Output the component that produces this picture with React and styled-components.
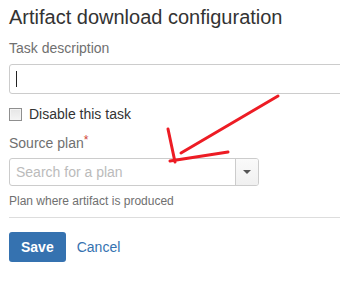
import React from 'react';
import styled, { createGlobalStyle } from 'styled-components';

const GlobalStyle = createGlobalStyle`
  html, body {
    margin: 0;
    padding: 0;
    background: #fff;
    overflow: hidden;
  }
  body {
    font-family: Arial, "Liberation Sans", sans-serif;
    color: #333;
  }
`;

const App = () => {
  return (
    <Page>
      <GlobalStyle />
      <Form>
        <Title>Artifact download configuration</Title>
        <Field>
          <Label>Task description</Label>
          <TextBox>
            <Caret />
          </TextBox>
        </Field>
        <CheckRow>
          <CheckBox />
          <CheckLabel>Disable this task</CheckLabel>
        </CheckRow>
        <Field>
          <Label>
            Source plan<Required>*</Required>
          </Label>
          <Select>
            <Placeholder>Search for a plan</Placeholder>
            <SelectButton>
              <Triangle />
            </SelectButton>
          </Select>
          <Help>Plan where artifact is produced</Help>
        </Field>
        <Divider />
        <Buttons>
          <SaveButton>Save</SaveButton>
          <CancelLink>Cancel</CancelLink>
        </Buttons>
      </Form>
      <Annotation width="340" height="281" viewBox="0 0 340 281">
        <line x1="278" y1="96" x2="181" y2="153" />
        <line x1="168" y1="129" x2="175" y2="162" />
        <line x1="170" y1="161" x2="228" y2="152" />
      </Annotation>
    </Page>
  );
};

export default App;

const Page = styled.div`
  position: relative;
  width: 340px;
  height: 281px;
  overflow: hidden;
`;

const Form = styled.div`
  display: flex;
  flex-direction: column;
  padding: 5px 0 0 9px;
`;

const Title = styled.h2`
  margin: 0;
  font-size: 20px;
  line-height: 24px;
  font-weight: normal;
  color: #333;
  white-space: nowrap;
`;

const Field = styled.div`
  display: flex;
  flex-direction: column;
`;

const Label = styled.label`
  font-size: 14px;
  line-height: 20px;
  color: #707070;
  margin-top: 9px;
  margin-bottom: 6px;
`;

const Required = styled.span`
  color: #d04437;
  font-size: 12px;
  vertical-align: top;
  line-height: 14px;
`;

const TextBox = styled.div`
  box-sizing: border-box;
  width: 400px;
  height: 30px;
  border: 1px solid #ccc;
  border-radius: 3px;
  display: flex;
  align-items: center;
  padding-left: 6px;
`;

const Caret = styled.span`
  width: 1px;
  height: 16px;
  background: #222;
`;

const CheckRow = styled.div`
  display: flex;
  align-items: center;
  gap: 7px;
  margin-top: 10px;
  height: 20px;
`;

const CheckBox = styled.span`
  box-sizing: border-box;
  width: 13px;
  height: 13px;
  border: 1px solid #8f8f8f;
  background: linear-gradient(#e6e6e6, #f4f4f4);
  box-shadow: inset 0 0 0 1px #f4f4f4;
`;

const CheckLabel = styled.span`
  font-size: 14px;
  color: #333;
`;

const Select = styled.div`
  box-sizing: border-box;
  width: 250px;
  height: 28px;
  border: 1px solid #ccc;
  border-radius: 3px;
  display: flex;
  align-items: stretch;
  margin-top: -1px;
`;

const Placeholder = styled.span`
  flex: 1;
  display: flex;
  align-items: center;
  padding-left: 6px;
  font-size: 14px;
  color: #bbb;
`;

const SelectButton = styled.span`
  width: 22px;
  border-left: 1px solid #ccc;
  background: linear-gradient(#fafafa, #f0f0f0);
  border-radius: 0 2px 2px 0;
  display: flex;
  align-items: center;
  justify-content: center;
`;

const Triangle = styled.span`
  width: 0;
  height: 0;
  border-left: 4px solid transparent;
  border-right: 4px solid transparent;
  border-top: 4px solid #555;
`;

const Help = styled.div`
  font-size: 12px;
  line-height: 16px;
  color: #707070;
  margin-top: 7px;
`;

const Divider = styled.div`
  height: 1px;
  background: #ddd;
  margin-top: 8px;
  margin-right: -9px;
`;

const Buttons = styled.div`
  display: flex;
  align-items: center;
  gap: 11px;
  margin-top: 14px;
`;

const SaveButton = styled.button`
  height: 30px;
  padding: 0 12px;
  border: none;
  border-radius: 3px;
  background: #3572b0;
  color: #fff;
  font-family: Arial, "Liberation Sans", sans-serif;
  font-size: 14px;
  font-weight: bold;
`;

const CancelLink = styled.a`
  font-size: 14px;
  color: #3572b0;
`;

const Annotation = styled.svg`
  position: absolute;
  left: 0;
  top: 0;
  pointer-events: none;

  line {
    stroke: #ed1c24;
    stroke-width: 3;
    stroke-linecap: round;
  }
`;
